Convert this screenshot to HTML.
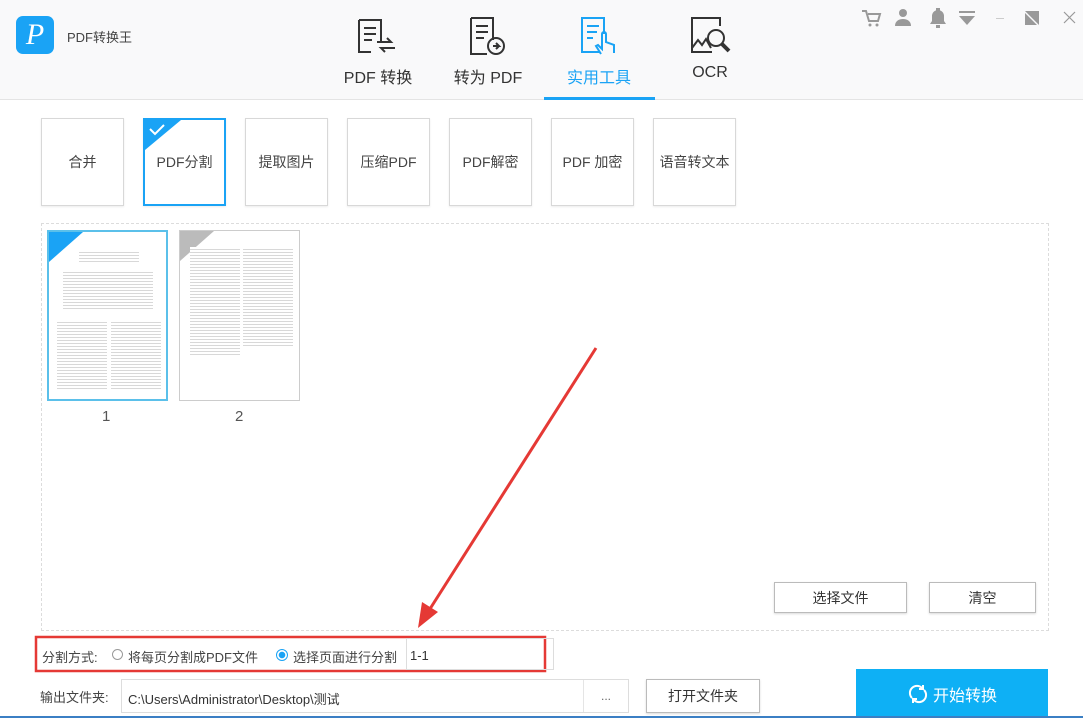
<!DOCTYPE html>
<html><head><meta charset="utf-8"><style>
*{margin:0;padding:0;box-sizing:border-box}
body{width:1083px;height:718px;overflow:hidden;background:#fff;font-family:"Liberation Sans","Noto Sans CJK SC",sans-serif;color:#333;position:relative}
.hdr{position:absolute;left:0;top:0;width:1083px;height:100px;background:#f9f9fa;border-bottom:1px solid #e4e4e4}
.abs{position:absolute}
.tab{position:absolute;top:64px;font-size:16px;color:#333;text-align:center;width:100px}
.tool{position:absolute;top:118px;width:83px;height:88px;border:1px solid #d8d8d8;background:#fff;font-size:14px;color:#444;display:flex;align-items:center;justify-content:center;box-shadow:0 1px 2px rgba(0,0,0,.08)}
.drop{position:absolute;left:41px;top:223px;width:1008px;height:408px;border:1px dashed #dcdcdc}
.thumb{position:absolute;top:230px;width:121px;height:171px;border:1px solid #ccc;background:#fff;overflow:hidden}
.lines{position:absolute;background:repeating-linear-gradient(#fff 0 2px,#d8d8d8 2px 3px)}
.btn{position:absolute;border:1px solid #bbb;background:#fff;font-size:14px;color:#333;display:flex;align-items:center;justify-content:center;box-shadow:0 1px 2px rgba(0,0,0,.15)}
.ic{position:absolute}
</style></head><body>
<div class="hdr"></div>
<div class="abs" style="left:16px;top:16px;width:38px;height:38px;background:#1aa3f5;border-radius:7px;color:#fff;font-size:30px;font-style:italic;text-align:center;line-height:38px;font-family:'Liberation Serif',serif">P</div>
<div class="abs" style="left:67px;top:27px;font-size:13px;color:#444">PDF转换王</div>

<svg class="ic" style="left:355px;top:18px" width="44" height="40" viewBox="0 0 44 40" fill="none" stroke="#333" stroke-width="2"><path d="M4 2h22v22M4 2v32h12"/><path d="M9 10h12M9 16h12M9 22h8"/><path d="M22 24h14l-4-4M40 30H26l4 4"/></svg>
<svg class="ic" style="left:466px;top:16px" width="44" height="42" viewBox="0 0 44 42" fill="none" stroke="#333" stroke-width="2"><path d="M5 2h22v22M5 2v36h16"/><path d="M10 10h12M10 16h12M10 22h8"/><circle cx="30" cy="30" r="8"/><path d="M27 30h6l-3-3M33 30l-3 3"/></svg>
<svg class="ic" style="left:577px;top:16px" width="44" height="42" viewBox="0 0 44 42" fill="none" stroke="#1aa3f5" stroke-width="2"><path d="M23 36H5V2h22v16"/><path d="M10 10h12M10 16h10M10 22h6"/><path d="M24 38l-5-8 2-1 4 4V18a2 2 0 014 0v8l8 3v8"/></svg>
<svg class="ic" style="left:690px;top:16px" width="44" height="42" viewBox="0 0 44 42" fill="none" stroke="#333" stroke-width="2"><path d="M22 36H2V2h28v8M2 32l6-8 4 5 4-6 5 9"/><circle cx="26" cy="22" r="8"/><path d="M32 28l7 7" stroke-width="4"/></svg>

<div class="tab" style="left:328px">PDF 转换</div>
<div class="tab" style="left:438px">转为 PDF</div>
<div class="tab" style="left:549px;color:#1aa3f5">实用工具</div>
<div class="tab" style="left:660px">OCR</div>
<div class="abs" style="left:544px;top:97px;width:111px;height:3px;background:#1aa3f5"></div>

<svg class="ic" style="left:860px;top:8px" width="220" height="20" viewBox="0 0 220 20" fill="#999"><path d="M2 3h4l3 10h9l2-7H8" stroke="#999" stroke-width="2" fill="none"/><circle cx="10" cy="17" r="1.5"/><circle cx="17" cy="17" r="1.5"/><circle cx="43" cy="5" r="4"/><path d="M35 18c0-5 4-7 8-7s8 2 8 7z"/><path d="M70 16h16l-2-3V8a6 6 0 00-12 0v5z"/><rect x="76" y="0" width="4" height="3"/><rect x="76" y="17" width="4" height="3"/><rect x="99" y="3" width="16" height="2"/><path d="M99 8h16l-8 9z"/><rect x="136" y="10" width="8" height="1" fill="#ccc"/><path d="M165 3h14v14zM165 5v12h12z"/><path d="M204 4l11 11M215 4L204 15" stroke="#999" stroke-width="1.2"/></svg>

<div class="tool" style="left:41px">合并</div>
<div class="tool" style="left:143px;border:2px solid #1aa3f5">PDF分割
<svg class="abs" style="left:0;top:0" width="36" height="30"><path d="M0 0h36L0 30z" fill="#1aa3f5"/><path d="M5 9l5 5 9-9" stroke="#fff" stroke-width="2" fill="none"/></svg></div>
<div class="tool" style="left:245px">提取图片</div>
<div class="tool" style="left:347px">压缩PDF</div>
<div class="tool" style="left:449px">PDF解密</div>
<div class="tool" style="left:551px">PDF 加密</div>
<div class="tool" style="left:653px">语音转文本</div>

<div class="drop"></div>
<div class="thumb" style="left:47px;border:2px solid #5bc0ea">
<svg class="abs" style="left:0;top:0" width="34" height="30"><path d="M0 0h34L0 30z" fill="#1aa3f5"/></svg>
<div class="lines" style="left:30px;top:18px;width:60px;height:12px"></div>
<div class="lines" style="left:14px;top:38px;width:90px;height:40px"></div>
<div class="lines" style="left:8px;top:88px;width:50px;height:70px"></div>
<div class="lines" style="left:62px;top:88px;width:50px;height:70px"></div>
</div>
<div class="thumb" style="left:179px">
<svg class="abs" style="left:0;top:0" width="34" height="30"><path d="M0 0h34L0 30z" fill="#bbb"/></svg>
<div class="lines" style="left:10px;top:16px;width:50px;height:110px"></div>
<div class="lines" style="left:63px;top:16px;width:50px;height:100px"></div>
</div>
<div class="abs" style="left:102px;top:408px;font-size:15px;color:#555">1</div>
<div class="abs" style="left:235px;top:408px;font-size:15px;color:#555">2</div>

<svg class="abs" style="left:0;top:0;pointer-events:none" width="1083" height="718"><path d="M596 348L428 612" stroke="#e53935" stroke-width="3"/><path d="M418 628l4-26 16 10z" fill="#e53935"/><rect x="36" y="637" width="509" height="34" fill="none" stroke="#e53935" stroke-width="2.5"/></svg>

<div class="btn" style="left:774px;top:582px;width:133px;height:31px">选择文件</div>
<div class="btn" style="left:929px;top:582px;width:107px;height:31px">清空</div>

<div class="abs" style="left:42px;top:647px;font-size:13px;color:#444">分割方式:</div>
<div class="abs" style="left:112px;top:649px;width:11px;height:11px;border:1px solid #999;border-radius:50%"></div>
<div class="abs" style="left:128px;top:647px;font-size:13px;color:#444">将每页分割成PDF文件</div>
<div class="abs" style="left:276px;top:649px;width:12px;height:12px;border:1px solid #1aa3f5;border-radius:50%;background:radial-gradient(#1aa3f5 0 3px,#fff 3.5px)"></div>
<div class="abs" style="left:293px;top:647px;font-size:13px;color:#444">选择页面进行分割</div>
<div class="abs" style="left:406px;top:638px;width:148px;height:32px;border:1px solid #ddd;font-size:13px;padding:9px 3px">1-1</div>

<div class="abs" style="left:40px;top:687px;font-size:13px;color:#444">输出文件夹:</div>
<div class="abs" style="left:121px;top:679px;width:508px;height:34px;border:1px solid #ddd;font-size:13px;padding:9px 6px">C:\Users\Administrator\Desktop\测试</div>
<div class="abs" style="left:583px;top:680px;width:1px;height:32px;background:#e5e5e5"></div>
<div class="abs" style="left:601px;top:689px;font-size:12px;color:#666">...</div>
<div class="btn" style="left:646px;top:679px;width:114px;height:34px">打开文件夹</div>
<div class="abs" style="left:856px;top:669px;width:192px;height:49px;background:#0eb0f5;color:#fff;font-size:16px;display:flex;align-items:center;justify-content:center">
<svg width="22" height="22" viewBox="0 0 22 22" fill="none" stroke="#fff" stroke-width="2" style="margin-right:4px"><path d="M5 15a7 7 0 0110-10l1 1M17 7a7 7 0 01-10 10l-1-1"/><path d="M16 2v4h-4M6 20v-4h4"/></svg>开始转换</div>
<div class="abs" style="left:0;top:716px;width:1083px;height:2px;background:#3b7fc4"></div>
</body></html>
